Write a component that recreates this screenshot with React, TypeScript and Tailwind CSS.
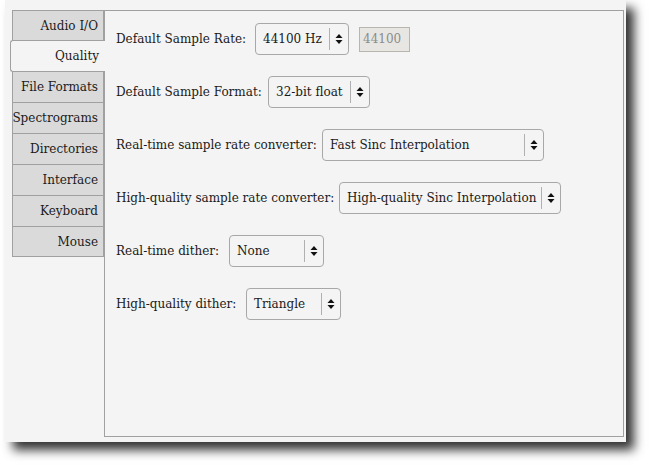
import React from "react";

const Arrows = () => (
  <svg width="8" height="12" viewBox="0 0 8 12" className="shrink-0">
    <path d="M4 1 L7.5 5 L0.5 5 Z" fill="#111" />
    <path d="M4 11 L7.5 7 L0.5 7 Z" fill="#111" />
  </svg>
);

function Combo({ value, w }: { value: string; w: string }) {
  return (
    <div
      className={`${w} shrink-0 h-[32px] flex items-center rounded-[4px] border border-[#a8a8a8] bg-[#f4f4f4] pl-[7px]`}
    >
      <span className="flex-1 whitespace-nowrap">{value}</span>
      <div className="w-px h-[22px] bg-[#b0b0b0]" />
      <div className="w-[18px] flex justify-center">
        <Arrows />
      </div>
    </div>
  );
}

const tabs = [
  "Audio I/O",
  "Quality",
  "File Formats",
  "Spectrograms",
  "Directories",
  "Interface",
  "Keyboard",
  "Mouse",
];

export default function App() {
  return (
    <div className="w-[652px] h-[466px] bg-white text-[12px] text-[#1a1a1a] font-['DejaVu_Serif',serif]">
      <div className="ml-[5px] w-[621px] h-[442px] bg-[#f4f4f4] shadow-[8px_8px_10px_rgba(0,0,0,0.8)] pt-[10px] pl-[7px] flex">
        <div className="w-[92px] flex flex-col">
          {tabs.map((t) =>
            t === "Quality" ? (
              <div
                key={t}
                className="relative -ml-[2px] w-[95px] h-[32px] -my-px z-10 bg-[#f4f4f4] border border-r-0 border-[#a0a0a0] rounded-l-[3px] flex items-center justify-end pr-[6px]"
              >
                {t}
              </div>
            ) : (
              <div
                key={t}
                className="h-[31px] bg-[#dadada] border border-[#a0a0a0] border-b-0 last:border-b flex items-center justify-end pr-[5px] whitespace-nowrap"
              >
                {t}
              </div>
            )
          )}
        </div>
        <div className="w-[520px] h-[427px] border border-[#a0a0a0] bg-[#f4f4f4] pl-[11px] pt-[12px] flex flex-col gap-[21px] whitespace-nowrap">
          <div className="flex items-center h-[32px]">
            <span className="w-[139px] shrink-0">Default Sample Rate:</span>
            <Combo value="44100 Hz" w="w-[94px]" />
            <div className="ml-[10px] w-[51px] h-[25px] border border-[#b8b4ae] bg-[#e8e6e2] text-[#8c8c8c] flex items-center pl-[3px]">
              44100
            </div>
          </div>
          <div className="flex items-center h-[32px]">
            <span className="w-[152px] shrink-0">Default Sample Format:</span>
            <Combo value="32-bit float" w="w-[102px]" />
          </div>
          <div className="flex items-center h-[32px]">
            <span className="w-[206px] shrink-0">Real-time sample rate converter:</span>
            <Combo value="Fast Sinc Interpolation" w="w-[222px]" />
          </div>
          <div className="flex items-center h-[32px]">
            <span className="w-[223px] shrink-0">High-quality sample rate converter:</span>
            <Combo value="High-quality Sinc Interpolation" w="w-[222px]" />
          </div>
          <div className="flex items-center h-[32px]">
            <span className="w-[113px] shrink-0">Real-time dither:</span>
            <Combo value="None" w="w-[95px]" />
          </div>
          <div className="flex items-center h-[32px]">
            <span className="w-[130px] shrink-0">High-quality dither:</span>
            <Combo value="Triangle" w="w-[95px]" />
          </div>
        </div>
      </div>
    </div>
  );
}
